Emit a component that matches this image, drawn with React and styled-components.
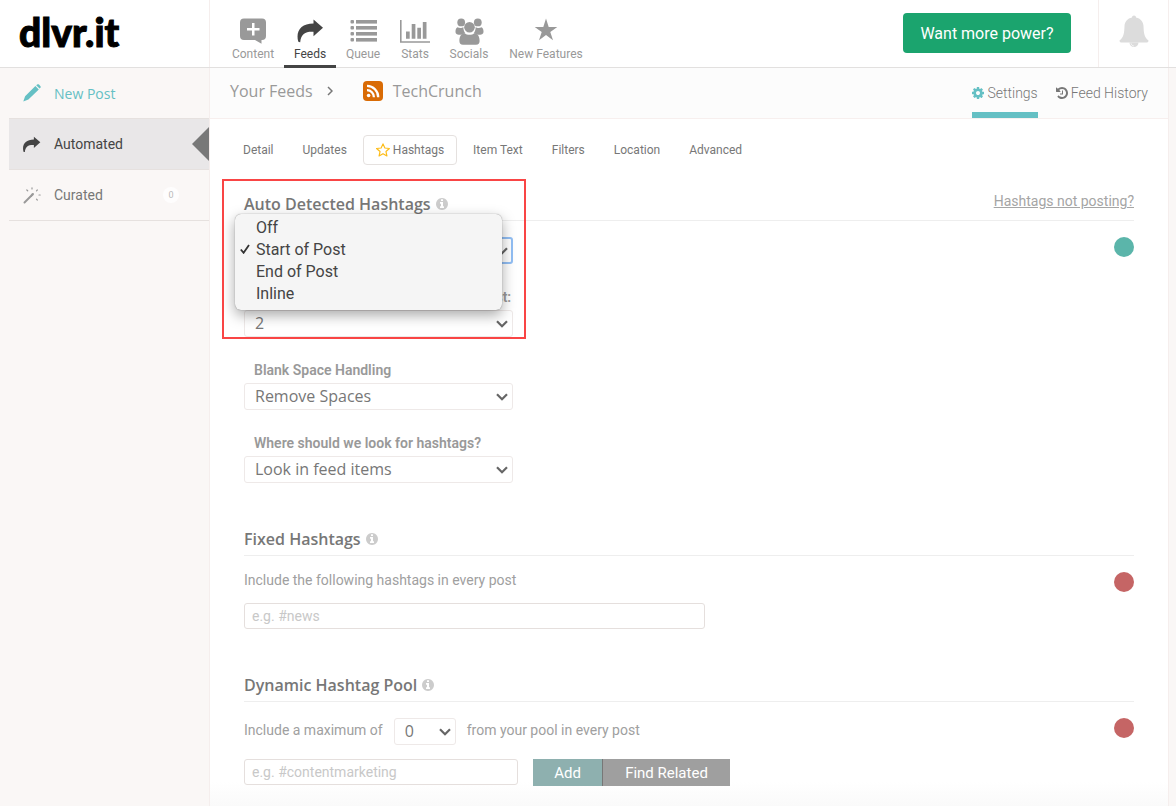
import React, { useState } from "react";
import styled, { createGlobalStyle } from "styled-components";

const GlobalStyle = createGlobalStyle`
  *, *::before, *::after { box-sizing: border-box; }
  body {
    margin: 0;
    background: #fff;
    color: #777;
    font-family: Roboto, "Liberation Sans", sans-serif;
  }
  button, input, select { font: inherit; margin: 0; }
  h2, p { margin: 0; }
  a { color: inherit; text-decoration: none; }
  svg { display: block; flex: none; }
`;

const humanist = `"Open Sans", "Noto Sans", sans-serif`;

/* ---------- icons ---------- */

const Svg = ({ box = "0 0 24 24", w = 24, h = w, children, ...rest }) => (
  <svg viewBox={box} width={w} height={h} fill="currentColor" aria-hidden="true" {...rest}>
    {children}
  </svg>
);

const ShareIcon = ({ w = 28, h = 24 }) => (
  <Svg box="0 0 28 24" w={w} h={h}>
    <path d="M17.500 0.500 L27 8.700 L17.500 17.200 V12.800 C10 12.300 5 14.500 4.200 23.200 C3.200 23.200 2.600 23 2.200 22.600 C-0.500 12 5 4.700 17.500 4.600 Z" />
  </Svg>
);

const ContentIcon = () => (
  <Svg box="0 0 26 26" w={26}>
    <path
      fillRule="evenodd"
      d="M4 0.500H22A4 4 0 0 1 26 4.500V18A4 4 0 0 1 22 22H21.500V25.800L15 22H4A4 4 0 0 1 0 18V4.500A4 4 0 0 1 4 0.500ZM12 5V10H7V12.500H12V17.500H14.500V12.500H19.500V10H14.500V5Z"
    />
  </Svg>
);

const QueueIcon = () => (
  <Svg box="0 0 27 22" w={27} h={22}>
    {[0, 6, 12, 18].map((y) => (
      <g key={y}>
        <rect x="0.500" y={y} width="3.500" height="3.500" rx="1" />
        <rect x="6" y={y} width="21" height="3.600" />
      </g>
    ))}
  </Svg>
);

const StatsIcon = () => (
  <Svg box="0 0 30 23" w={30} h={23}>
    <path d="M0 0H1.600V21.200H30V22.800H0ZM6 11.500H9.700V18.800H6ZM11.700 4H15.400V18.800H11.700ZM17.300 7.800H21V18.800H17.300ZM22.800 2H26.500V18.800H22.800Z" />
  </Svg>
);

const SocialsIcon = () => (
  <Svg box="0 0 29 27" w={29} h={27}>
    <circle cx="6.200" cy="4.400" r="3.900" />
    <circle cx="22.800" cy="4.400" r="3.900" />
    <path d="M2.500 9.200C4 10.200 7 10.300 8.300 9C8.400 12 9 13.500 10.300 15.300C8 16.200 7 16.800 5.500 16.800C1.500 17 0.500 15.500 0.500 13.500C0.500 11.500 1 10 2.500 9.200Z" />
    <path d="M26.500 9.200C25 10.200 22 10.300 20.700 9C20.600 12 20 13.500 18.700 15.300C21 16.200 22 16.800 23.500 16.800C27.500 17 28.500 15.500 28.500 13.500C28.500 11.500 28 10 26.500 9.200Z" />
    <circle cx="14.500" cy="9.300" r="5.300" />
    <path d="M9.700 15.200C12 17.200 17 17.200 19.300 15.200C23 15.500 24.600 18.500 24.600 23C24.600 25.300 23.500 26.700 21 26.700H8C5.500 26.700 4.400 25.300 4.400 23C4.400 18.500 6 15.500 9.700 15.200Z" />
  </Svg>
);

const StarIcon = () => (
  <Svg box="0 0 24 26" w={24} h={26}>
    <path d="M12 0.500L14.700 8.900H23.300L16.300 13.900L19 22.300L12 17.100L5 22.300L7.700 13.900L0.700 8.900H9.300Z" />
  </Svg>
);

const OutlineStar = () => (
  <Svg w={14} stroke="#fdbc18" strokeWidth="2" strokeLinejoin="round">
    <path
      fill="none"
      d="M12 1.500L15.200 8.600L23 9.400L17.100 14.600L18.800 22.300L12 18.300L5.200 22.300L6.900 14.600L1 9.400L8.800 8.600Z"
    />
  </Svg>
);

const BellIcon = () => (
  <Svg box="0 0 30 33" w={30} h={33}>
    <path d="M15 0.500C16.200 0.500 17 1.300 17 2.500C21.500 3.300 24.300 6.800 24.500 11C24.800 18 25 22 29.500 25.500C29.500 26.900 28.700 27.600 27.500 27.600H2.500C1.300 27.600 0.500 26.900 0.500 25.500C5 22 5.200 18 5.500 11C5.700 6.800 8.500 3.300 13 2.500C13 1.300 13.800 0.500 15 0.500Z" />
    <path d="M10.500 27.600H19.500A4.500 4.500 0 0 1 10.500 27.600Z" />
    <path d="M12 28.300C12.300 29.800 13.400 30.800 14.900 31" fill="none" stroke="#fff" strokeWidth="0.700" />
  </Svg>
);

const PencilIcon = () => (
  <Svg box="0 0 18 18" w={18}>
    <path d="M13.200 1.300L14.200 0.500C14.800 0 15.400 0 16 0.600L17.300 1.900C17.900 2.500 17.900 3.200 17.400 3.700L16.500 4.600ZM12.400 2L15.800 5.400L5.400 15.400L0.300 17.600L2.100 12.200Z" />
  </Svg>
);

const WandIcon = () => (
  <Svg box="0 0 18 17" w={18} h={17} fill="none" stroke="#999" strokeLinecap="round">
    <path d="M1.500 15.500L8.500 8.500" strokeWidth="2" />
    <path d="M9 8L9.800 7.200" strokeWidth="2.400" />
    <path
      d="M9 0.800V2M3.800 3L4.700 3.800M14.300 3L13.500 3.800M16 8H17.200M13.500 12.200L14.300 13"
      strokeWidth="1.200"
    />
  </Svg>
);

const RssIcon = () => (
  <Svg box="0 0 20 20" w={20}>
    <rect width="20" height="20" rx="4" fill="#d96b05" />
    <circle cx="5.600" cy="14.500" r="1.800" fill="#fff" />
    <path d="M4 9.200A6.900 6.900 0 0 1 10.900 16.200M4 4.900A11.200 11.200 0 0 1 15.200 16.200" fill="none" stroke="#fff" strokeWidth="2.300" />
  </Svg>
);

const CogIcon = () => (
  <Svg box="0 128 1536 1536" w={12}>
    <path d="M1024 896q0-106-75-181t-181-75-181 75-75 181 75 181 181 75 181-75 75-181zm512-109v222q0 12-8 23t-20 13l-185 28q-19 54-39 91 35 50 107 138 10 12 10 25t-9 23q-27 37-99 108t-94 71q-12 0-26-9l-138-108q-44 23-91 38-16 136-29 186-7 28-36 28h-222q-14 0-24.500-8.500t-11.500-21.500l-28-184q-49-16-90-37l-141 107q-10 9-25 9-14 0-25-11-126-114-165-168-7-10-7-23 0-12 8-23 15-21 51-66.500t54-70.500q-27-50-41-99l-183-27q-13-2-21-12.500t-8-23.500v-222q0-12 8-23t19-13l186-28q14-46 39-92-40-57-107-138-10-12-10-24 0-10 9-23 26-36 98.500-107.500t94.500-71.500q13 0 26 10l138 107q44-23 91-38 16-136 29-186 7-28 36-28h222q14 0 24.500 8.500t11.500 21.500l28 184q49 16 90 37l142-107q9-9 24-9 13 0 25 10 129 119 165 170 7 8 7 22 0 12-8 23-15 21-51 66.500t-54 70.500q26 50 41 98l183 28q13 2 21 12.500t8 23.500z" />
  </Svg>
);

const HistoryIcon = () => (
  <Svg box="0 128 1536 1536" w={12}>
    <path d="M1536 896q0 156-61 298t-164 245-245 164-298 61q-172 0-327-72.500t-264-204.500q-7-10-6.500-22.500t8.500-20.500l137-138q10-9 25-9 16 2 23 12 73 95 179 147t225 52q104 0 198.500-40.500t163.500-109.500 109.500-163.500 40.500-198.500-40.500-198.500-109.500-163.500-163.500-109.500-198.500-40.500q-98 0-188 35.500t-160 101.500l137 138q31 30 14 69-17 40-59 40h-448q-26 0-45-19t-19-45v-448q0-42 40-59 39-17 69 14l130 129q107-101 244.500-156.500t284.500-55.500q156 0 298 61t245 164 164 245 61 298zm-640-288v448q0 14-9 23t-23 9h-320q-14 0-23-9t-9-23v-64q0-14 9-23t23-9h224v-352q0-14 9-23t23-9h64q14 0 23 9t9 23z" />
  </Svg>
);

const InfoIcon = () => (
  <Svg box="0 128 1536 1536" w={12} color="#ccc">
    <path d="M1024 1376v-160q0-14-9-23t-23-9h-96v-512q0-14-9-23t-23-9h-320q-14 0-23 9t-9 23v160q0 14 9 23t23 9h96v320h-96q-14 0-23 9t-9 23v160q0 14 9 23t23 9h448q14 0 23-9t9-23zm-128-896v-160q0-14-9-23t-23-9h-192q-14 0-23 9t-9 23v160q0 14 9 23t23 9h192q14 0 23-9t9-23zm640 416q0 209-103 385.500t-279.500 279.500-385.500 103-385.500-103-279.500-279.500-103-385.500 103-385.500 279.500-279.500 385.500-103 385.500 103 279.500 279.500 103 385.500z" />
  </Svg>
);

const CheckIcon = () => (
  <Svg box="0 0 10 10" w={10} fill="none" stroke="#333" strokeWidth="1.800">
    <path d="M0.800 5.500L3.600 8.800L9 1" />
  </Svg>
);

/* ---------- header ---------- */

const Header = styled.header`
  display: flex;
  height: 68px;
  border-bottom: 1px solid #e2e0df;
  background: #fff;
`;

const Logo = styled.a`
  flex: none;
  width: 210px;
  padding: 7px 0 0 19px;
  border-right: 1px solid #f5eeed;
  color: #000;
  font: 900 39px/50px Lato, sans-serif;
  -webkit-text-stroke: 1px #000;
`;

const TopNav = styled.nav`
  display: flex;
  flex: 1;
  gap: 8px;
  padding-left: 20px;
`;

const NavLink = styled.a`
  display: flex;
  flex-direction: column;
  align-items: center;
  min-width: ${(p) => p.$width}px;
  border-bottom: 3px solid ${(p) => (p.$active ? "#444" : "transparent")};
  height: 68px;
  color: ${(p) => (p.$active ? "#444" : "#999")};
  font-size: 12px;
  line-height: 16px;
`;

const NavIcon = styled.span`
  display: flex;
  align-items: center;
  height: 28px;
  margin-top: 17px;
`;

const NavLabel = styled.span`
  margin-top: 1px;
  white-space: nowrap;
`;

const PowerButton = styled.button`
  align-self: center;
  height: 40px;
  width: 168px;
  margin-right: 27px;
  margin-bottom: 1px;
  padding: 0;
  border: 0;
  border-radius: 4px;
  background: #1ba46e;
  color: #fff;
  font-size: 16px;
`;

const BellButton = styled.button`
  display: flex;
  justify-content: center;
  width: 71px;
  margin-right: 7px;
  padding: 15px 0 0;
  border: solid #f5eeed;
  border-width: 0 1px;
  background: none;
  color: #dcdcdc;
`;

/* ---------- page frame ---------- */

const Page = styled.div`
  display: flex;
  flex-direction: column;
  min-height: 100vh;
`;

const Body = styled.div`
  display: flex;
  flex: 1;
  padding-right: 7px;
  background: #faf7f6;
`;

const Sidebar = styled.nav`
  flex: none;
  width: 209px;
  padding-left: 9px;
`;

const SideLink = styled.a`
  position: relative;
  display: flex;
  align-items: center;
  gap: 12px;
  height: 51px;
  padding-left: 12px;
  border-bottom: 1px solid #e6e1df;
  background: ${(p) => (p.$active ? "#e9e7e8" : "transparent")};
  color: ${(p) => p.$color};
  font-size: 14px;
  ${(p) => p.$humanist && `font-family: ${humanist};`}
  ${(p) =>
    p.$active &&
    `&::after {
      content: "";
      position: absolute;
      right: 0;
      top: 8px;
      border: solid transparent;
      border-width: 17px 17px 17px 0;
      border-right-color: #787878;
    }`}
`;

const SideIcon = styled.span`
  display: flex;
  justify-content: center;
  width: 21px;
`;

const Count = styled.span`
  margin: 0 30px 0 auto;
  width: 16px;
  border-radius: 8px;
  background: #fefdfd;
  color: #bbb;
  font-size: 9px;
  line-height: 16px;
  text-align: center;
`;

const Main = styled.main`
  flex: 1;
  min-width: 0;
  border: solid #f5eeed;
  border-width: 0 1px;
  background: linear-gradient(to top, #fafafa, #fff 24px);
`;

const SubHeader = styled.div`
  display: flex;
  justify-content: space-between;
  height: 51px;
  padding: 0 20px;
  border-bottom: 1px solid #f7efee;
  background: #fcfcfc;
`;

const Crumbs = styled.div`
  display: flex;
  align-items: center;
  padding-bottom: 4px;
  color: #999;
  font: 400 16px/24px ${humanist};
`;

const CrumbArrow = styled.span`
  margin: 0 30px 0 14px;
  color: #777;
`;

const CrumbName = styled.span`
  margin-left: 10px;
`;

const PageLinks = styled.div`
  display: flex;
  gap: 18px;
`;

const PageLink = styled.a`
  display: flex;
  align-items: center;
  gap: 3px;
  height: 50px;
  border-bottom: 6px solid ${(p) => (p.$active ? "#65c0c4" : "transparent")};
  padding-top: 6px;
  font-size: 14px;
  font-weight: 300;
  svg { color: ${(p) => (p.$active ? "#65c0c4" : "#777")}; }
`;

const Tabs = styled.nav`
  display: flex;
  gap: 3px;
  padding: 16px 20px 0;
`;

const Tab = styled.a`
  display: flex;
  align-items: center;
  gap: 3px;
  height: 30px;
  padding: 0 12px;
  border: 1px solid ${(p) => (p.$active ? "#e5e1df" : "transparent")};
  border-radius: 4px;
  font-size: 12px;
`;

/* ---------- settings form ---------- */

const Form = styled.form`
  display: flex;
  flex-direction: column;
  gap: 43px;
  padding: 26px 34px 20px;
`;

const Section = styled.section`
  position: relative;
`;

const SectionHead = styled.div`
  display: flex;
  align-items: flex-start;
  justify-content: space-between;
  height: 30px;
  border-bottom: 1px solid #eee;
`;

const Title = styled.h2`
  display: flex;
  align-items: center;
  gap: 5px;
  color: #777;
  font: 600 16px/26px ${humanist};
`;

const HelpLink = styled.a`
  color: #a5a5a5;
  font-size: 14px;
  line-height: 20px;
  text-decoration: underline;
`;

const SectionBody = styled.div`
  display: flex;
  justify-content: space-between;
  padding-top: 16px;
`;

const Fields = styled.div`
  display: flex;
  flex-direction: column;
  gap: ${(p) => p.$gap}px;
`;

const Label = styled.label`
  display: block;
  padding-left: 10px;
  color: #999;
  font-size: 14px;
  font-weight: 600;
  line-height: 26px;
  white-space: nowrap;
`;

const SelectBox = styled.span`
  position: relative;
  display: block;
  width: ${(p) => p.$width}px;
  svg {
    position: absolute;
    right: 5px;
    top: 10px;
    pointer-events: none;
  }
`;

const SelectControl = styled.select`
  display: block;
  appearance: none;
  width: 100%;
  height: 27px;
  padding: 0 20px 2px 10px;
  border: ${(p) => (p.$open ? "2px solid #92bff5" : "1px solid #eee9e8")};
  border-radius: 3px;
  outline: 0;
  background: #fff;
  color: #777;
  font: 400 16px/24px ${humanist};
`;

const Dot = styled.button`
  flex: none;
  width: 20px;
  height: 20px;
  padding: 0;
  border: 0;
  border-radius: 50%;
  background: ${(p) => (p.$on ? "#5bb5aa" : "#c56565")};
`;

const Text = styled.p`
  color: #a0a0a0;
  font-size: 14px;
  line-height: ${(p) => (p.$tall ? 24 : 16)}px;
`;

const TextField = styled.input`
  width: ${(p) => p.$width}px;
  height: 26px;
  padding: 0 7px;
  border: 1px solid #e5dfdd;
  border-radius: 3px;
  background: #fff;
  color: #777;
  font-size: 14px;
  &::placeholder { color: #c8c8c8; }
`;

const Row = styled.div`
  display: flex;
  align-items: flex-start;
  gap: ${(p) => p.$gap}px;
`;

const ActionGroup = styled.div`
  display: flex;
`;

const Action = styled.button`
  width: ${(p) => p.$width}px;
  height: 27px;
  padding: 0;
  border: 0;
  border-right: ${(p) => (p.$primary ? "1px solid #777" : "0")};
  background: ${(p) => (p.$primary ? "#8eb0af" : "#9f9f9f")};
  color: #fff;
  font-size: 15px;
`;

const Menu = styled.ul`
  position: absolute;
  z-index: 2;
  left: -9px;
  top: 23px;
  width: 267px;
  height: 96px;
  margin: 0;
  padding: 2px 0 6px;
  border-radius: 6px;
  background: #f5f5f5;
  box-shadow: 0 0 1px rgba(0, 0, 0, 0.5), 0 5px 14px rgba(0, 0, 0, 0.35);
  list-style: none;
`;

const MenuItem = styled.li`
  display: flex;
  align-items: center;
  height: 22px;
  color: #444;
  font-size: 16px;
`;

const MenuTick = styled.span`
  width: 21px;
  padding-left: 5px;
`;

const Highlight = styled.div`
  position: absolute;
  z-index: 3;
  left: -22px;
  top: -12px;
  width: 304px;
  height: 160px;
  border: 2px solid #f94545;
  pointer-events: none;
`;

const Select = ({ id, width = 269, options, value, open, ...rest }) => (
  <SelectBox $width={width}>
    <SelectControl id={id} defaultValue={value} $open={open} {...rest}>
      {options.map((o) => (
        <option key={o}>{o}</option>
      ))}
    </SelectControl>
    <svg viewBox="0 0 12 8" width="12" height="8" fill="none" stroke="#666" strokeWidth="2.200" aria-hidden="true">
      <path d="M1 1.200L6 6.200L11 1.200" />
    </svg>
  </SelectBox>
);

const Field = ({ id, label, ...rest }) => (
  <div>
    <Label htmlFor={id}>{label}</Label>
    <Select id={id} {...rest} />
  </div>
);

const Heading = ({ children, help }) => (
  <SectionHead>
    <Title>
      {children}
      <InfoIcon />
    </Title>
    {help && <HelpLink href="#help">{help}</HelpLink>}
  </SectionHead>
);

const NAV = [
  ["Content", ContentIcon, 46],
  ["Feeds", ShareIcon, 52],
  ["Queue", QueueIcon, 38],
  ["Stats", StatsIcon, 50],
  ["Socials", SocialsIcon, 42],
  ["New Features", StarIcon, 96],
];

const TABS = ["Detail", "Updates", "Hashtags", "Item Text", "Filters", "Location", "Advanced"];

const PLACEMENTS = ["Off", "Start of Post", "End of Post", "Inline"];

export default function App() {
  const [placement, setPlacement] = useState("Start of Post");

  return (
    <Page>
      <GlobalStyle />
      <Header>
        <Logo href="#home">dlvr.it</Logo>
        <TopNav>
          {NAV.map(([name, Icon, width]) => (
            <NavLink key={name} href="#nav" $width={width} $active={name === "Feeds"}>
              <NavIcon>
                <Icon />
              </NavIcon>
              <NavLabel>{name}</NavLabel>
            </NavLink>
          ))}
        </TopNav>
        <PowerButton type="button">Want more power?</PowerButton>
        <BellButton type="button" aria-label="Notifications">
          <BellIcon />
        </BellButton>
      </Header>

      <Body>
        <Sidebar>
          <SideLink href="#new" $color="#65c0c4" $humanist>
            <SideIcon><PencilIcon /></SideIcon>
            New Post
          </SideLink>
          <SideLink href="#automated" $color="#444" $active>
            <SideIcon><ShareIcon w={19} h={17} /></SideIcon>
            Automated
          </SideLink>
          <SideLink href="#curated" $color="#777">
            <SideIcon><WandIcon /></SideIcon>
            Curated
            <Count>0</Count>
          </SideLink>
        </Sidebar>

        <Main>
          <SubHeader>
            <Crumbs>
              <a href="#feeds">Your Feeds</a>
              <CrumbArrow>
                <svg viewBox="0 0 6 10" width="6" height="10" fill="none" stroke="currentColor" strokeWidth="1.500">
                  <path d="M1 1L5 5L1 9" />
                </svg>
              </CrumbArrow>
              <RssIcon />
              <CrumbName>TechCrunch</CrumbName>
            </Crumbs>
            <PageLinks>
              <PageLink href="#settings" $active>
                <CogIcon />
                Settings
              </PageLink>
              <PageLink href="#history">
                <HistoryIcon />
                Feed History
              </PageLink>
            </PageLinks>
          </SubHeader>

          <Tabs>
            {TABS.map((name) => (
              <Tab key={name} href="#tab" $active={name === "Hashtags"}>
                {name === "Hashtags" && <OutlineStar />}
                {name}
              </Tab>
            ))}
          </Tabs>

          <Form onSubmit={(e) => e.preventDefault()}>
            <Section>
              <Highlight />
              <Heading help="Hashtags not posting?">Auto Detected Hashtags</Heading>
              <Menu role="listbox" aria-label="Hashtag placement">
                {PLACEMENTS.map((o) => (
                  <MenuItem key={o} role="option" aria-selected={o === placement} onClick={() => setPlacement(o)}>
                    <MenuTick>{o === placement && <CheckIcon />}</MenuTick>
                    {o}
                  </MenuItem>
                ))}
              </Menu>
              <SectionBody>
                <Fields $gap={20}>
                  <Select id="placement" aria-label="Hashtag placement" options={PLACEMENTS} value="Start of Post" open />
                  <Field id="max" label="Maximum number of hashtags on a post:" options={["1", "2", "3"]} value="2" />
                  <Field id="blank" label="Blank Space Handling" options={["Remove Spaces"]} />
                  <Field id="where" label="Where should we look for hashtags?" options={["Look in feed items"]} />
                </Fields>
                <Dot type="button" aria-label="Auto detected hashtags on" $on />
              </SectionBody>
            </Section>

            <Section>
              <Heading>Fixed Hashtags</Heading>
              <SectionBody>
                <Fields $gap={15}>
                  <Text as="label" htmlFor="fixed">Include the following hashtags in every post</Text>
                  <TextField id="fixed" $width={461} placeholder="e.g. #news" />
                </Fields>
                <Dot type="button" aria-label="Fixed hashtags off" />
              </SectionBody>
            </Section>

            <Section>
              <Heading>Dynamic Hashtag Pool</Heading>
              <SectionBody>
                <Fields $gap={14}>
                  <Row $gap={11}>
                    <Text as="label" htmlFor="pool-max" $tall>Include a maximum of</Text>
                    <Select id="pool-max" width={62} options={["0", "1", "2"]} />
                    <Text $tall>from your pool in every post</Text>
                  </Row>
                  <Row $gap={15}>
                    <TextField aria-label="Pool hashtag" $width={274} placeholder="e.g. #contentmarketing" />
                    <ActionGroup>
                      <Action type="button" $width={70} $primary>Add</Action>
                      <Action type="button" $width={127}>Find Related</Action>
                    </ActionGroup>
                  </Row>
                </Fields>
                <Dot type="button" aria-label="Dynamic pool off" />
              </SectionBody>
            </Section>
          </Form>
        </Main>
      </Body>
    </Page>
  );
}
